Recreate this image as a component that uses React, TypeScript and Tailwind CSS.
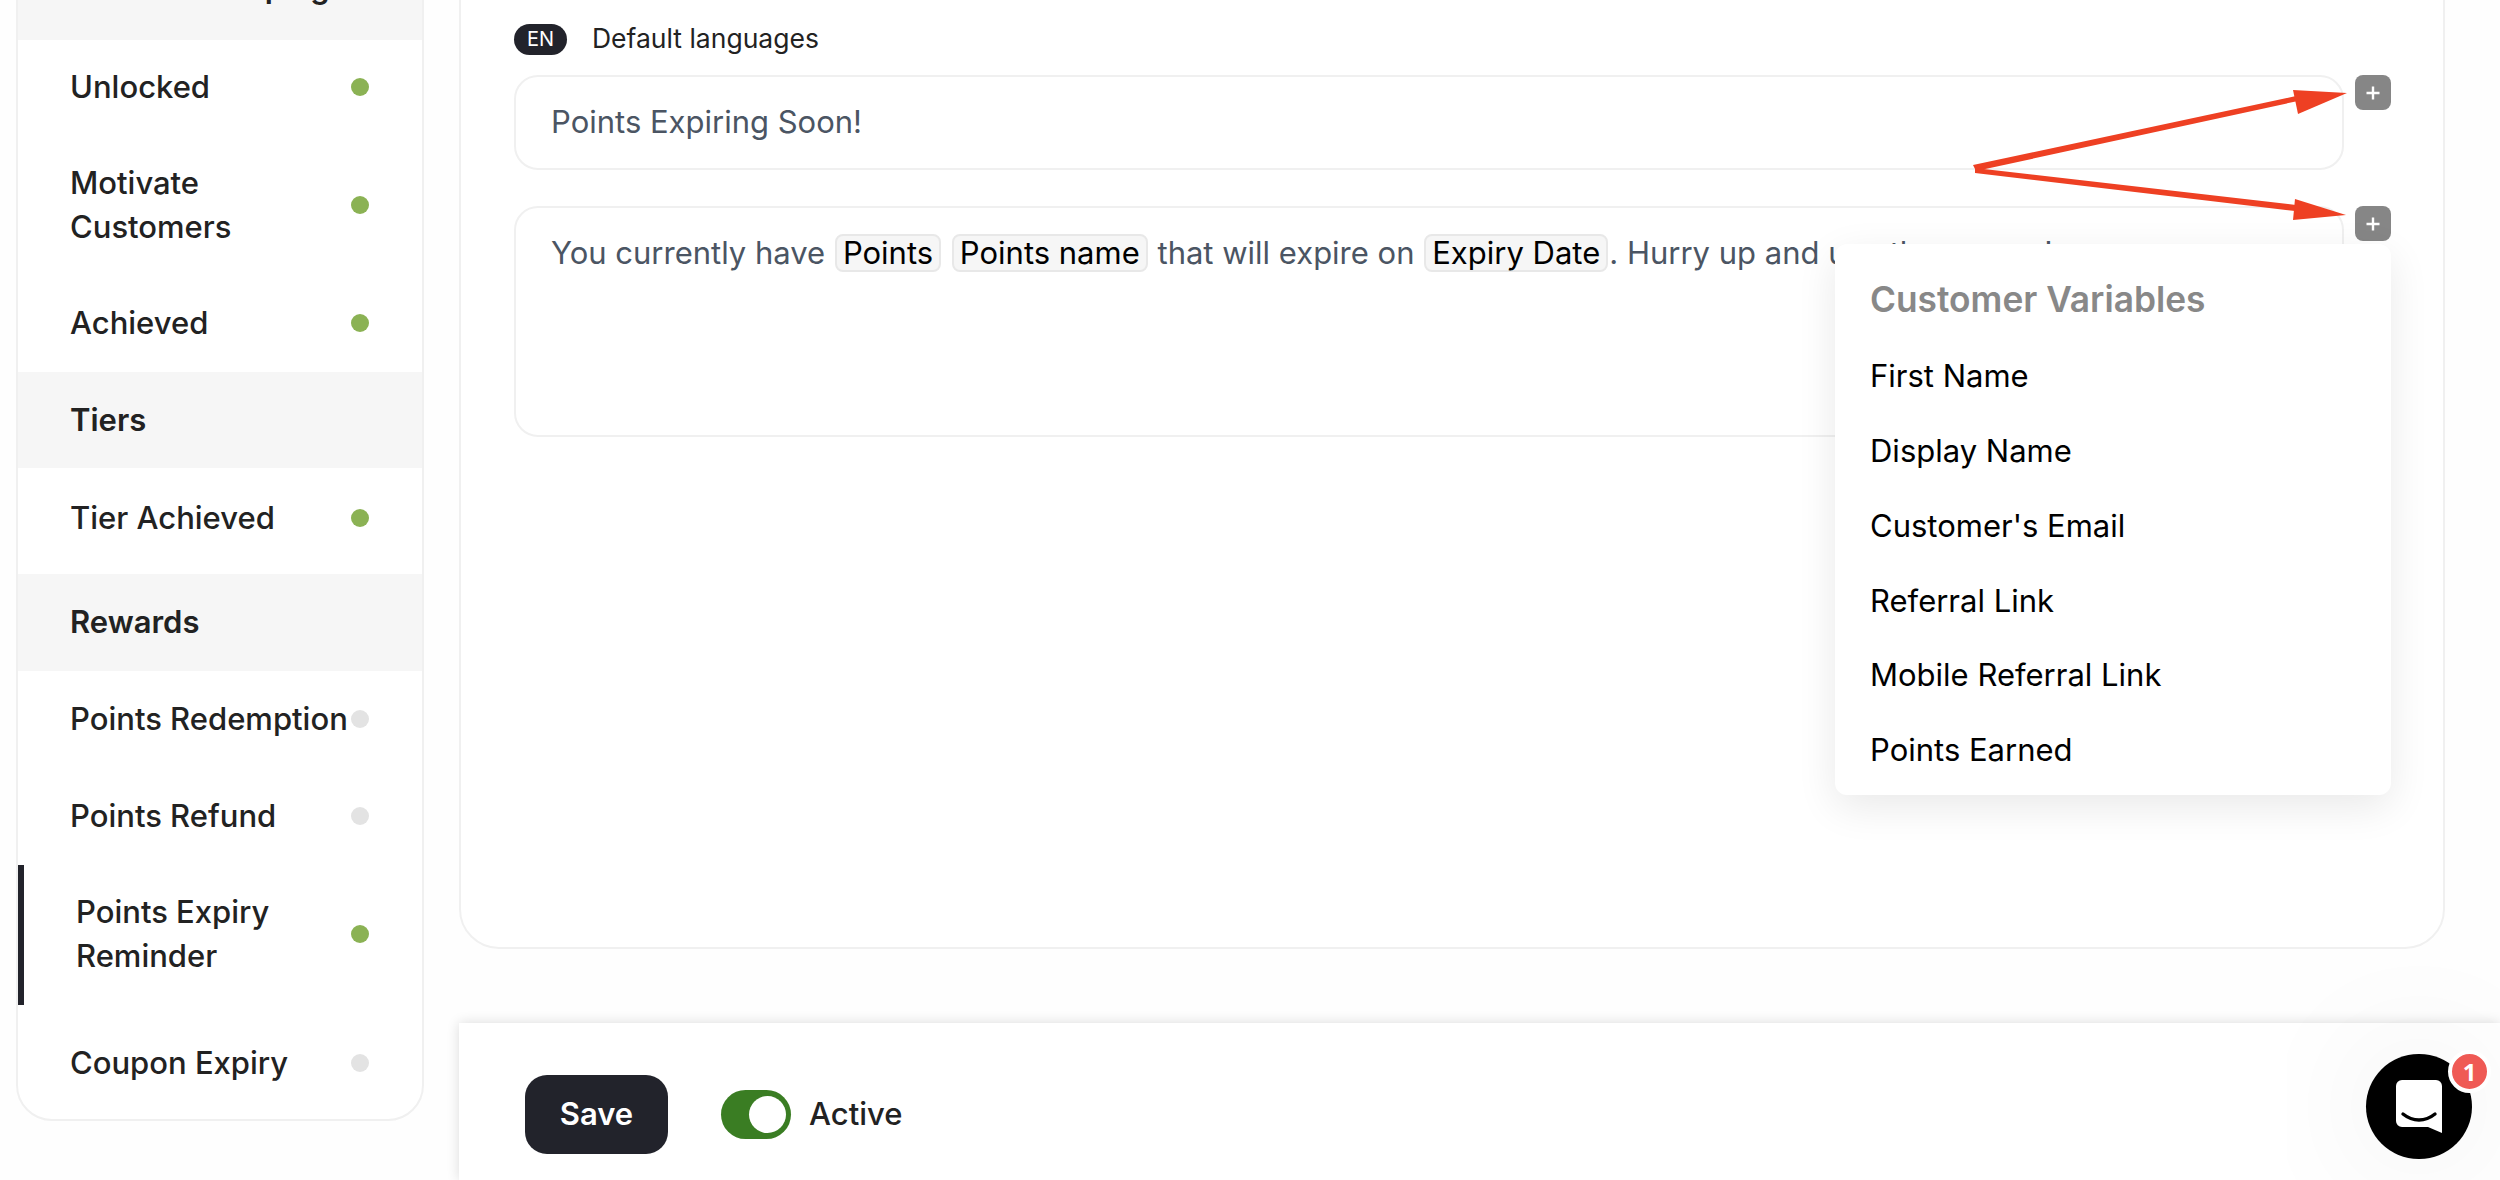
const sidebarItems = [
  { type: 'head', label: 'Referral Campaigns', extra: 'h-[96px] pb-[10px]' },
  { label: 'Unlocked', on: true },
  { label: 'Motivate Customers', on: true },
  { label: 'Achieved', on: true },
  { type: 'head', label: 'Tiers', extra: 'h-[96px]' },
  { label: 'Tier Achieved', on: true, extra: 'pt-[29px] pb-[33px]' },
  { type: 'head', label: 'Rewards', extra: 'h-[97px]' },
  { label: 'Points Redemption', on: false, extra: 'pt-[27px] pb-[27px]' },
  { label: 'Points Refund', on: false },
  { label: 'Points Expiry Reminder', on: true, active: true },
  { label: 'Coupon Expiry', on: false, extra: 'pt-[37px] pb-[34px]' },
];

const customerVariables = [
  'First Name',
  'Display Name',
  "Customer's Email",
  'Referral Link',
  'Mobile Referral Link',
  'Points Earned',
];

const Sidebar = () => (
  <aside className="ml-4 -mt-[58px] h-[1179px] w-[408px] shrink-0 self-start rounded-b-[36px] border-2 border-[#f0f0f0] bg-white">
    {sidebarItems.map((item) =>
      item.type === 'head' ? (
        <div key={item.label} className={`flex items-center bg-[#f6f6f6] pl-[52px] text-[31px] font-semibold text-[#222] ${item.extra}`}>
          {item.label}
        </div>
      ) : (
        <div
          key={item.label}
          className={`relative flex items-center justify-between pr-[53px] text-[31px] leading-[44px] font-medium text-[#222] ${
            item.active ? 'pl-[58px]' : 'pl-[52px]'
          } ${item.extra ?? 'py-[26px]'}`}
        >
          {item.active && <span className="absolute top-0 bottom-0 left-0 w-[6px] bg-[#22232b]" />}
          <span className="max-w-[280px] -translate-y-[1px]">{item.label}</span>
          <span className={`h-[18px] w-[18px] shrink-0 -translate-y-[1px] rounded-full ${item.on ? 'bg-[#8bb254]' : 'bg-[#e3e3e3]'}`} />
        </div>
      ),
    )}
  </aside>
);

const PlusButton = () => (
  <button className="flex h-[35px] w-[36px] shrink-0 items-center justify-center rounded-[8px] bg-[#868686]">
    <svg width="16" height="16" viewBox="0 0 16 16" fill="none" stroke="white" strokeWidth="2.4">
      <path d="M8 1.5v13M1.5 8h13" />
    </svg>
  </button>
);

const Chip = ({ children }: { children: string }) => (
  <span className="mx-[1px] inline-block rounded-[8px] border-2 border-[#e8e8e8] bg-[#f6f6f6] px-[6px] leading-[34px] text-black">
    {children}
  </span>
);

const Arrows = () => (
  <svg className="pointer-events-none absolute top-0 left-0" width="2500" height="400" fill="#ee4023">
    <path d="M1973 165L2296 96L2298 101L1976 171Z" />
    <path d="M2347 93L2293 90L2298 114Z" />
    <path d="M1975 168L2296 205L2295 211L1975 173Z" />
    <path d="M2346 215L2295 199L2293 220Z" />
  </svg>
);

const ChatWidget = () => (
  <div className="absolute top-[1054px] left-[2366px] flex h-[105px] w-[106px] items-center justify-center rounded-full bg-black shadow-[0_0_140px_rgba(0,0,0,0.09)]">
    <svg width="46" height="54" viewBox="0 0 46 54" className="mt-[1px]">
      <path d="M6 0H40a6 6 0 0 1 6 6V53L32 47H6a6 6 0 0 1-6-6V6a6 6 0 0 1 6-6Z" fill="white" />
      <path d="M7 34C17 42 29 42 39 34" fill="none" stroke="black" strokeWidth="3.4" strokeLinecap="round" />
    </svg>
    <span className="absolute -top-[4px] -right-[19px] flex h-[43px] w-[43px] items-center justify-center rounded-full border-4 border-white bg-[#ef5a55] font-['Open_Sans',sans-serif] text-[24px] font-bold text-white">
      1
    </span>
  </div>
);

export default function App() {
  return (
    <div className="relative flex h-[1180px] w-[2500px] overflow-hidden bg-[#fefefe] font-['Inter',sans-serif]">
      <Sidebar />

      <main className="ml-[35px] flex min-w-0 flex-1 flex-col">
        <div className="mr-[55px] -mt-[40px] h-[989px] rounded-[40px] border-2 border-[#f0f0f0] bg-white pr-[52px] pl-[53px] pt-[61px]">
          <div className="flex h-[32px] items-center gap-[25px]">
            <span className="flex h-[31px] w-[53px] items-center justify-center rounded-full bg-[#22232b] text-[20px] text-white">
              EN
            </span>
            <span className="text-[26.5px] text-[#222]">Default languages</span>
          </div>

          <div className="mt-[20px] flex items-start gap-[11px]">
            <div className="flex h-[95px] flex-1 items-center rounded-[24px] border-2 border-[#f0f0f0] pl-[35px] text-[31px] text-[#4b5563]">
              Points Expiring Soon!
            </div>
            <PlusButton />
          </div>

          <div className="relative mt-[36px] flex items-start gap-[11px]">
            <div className="h-[231px] flex-1 rounded-[24px] border-2 border-[#f0f0f0] px-[35px] pt-[23px] text-[31px] leading-[44px] text-[#4b5563]">
              You currently have <Chip>Points</Chip> <Chip>Points name</Chip> that will expire on <Chip>Expiry Date</Chip>. Hurry up and use them soon!
            </div>
            <PlusButton />

            <div className="absolute top-[38px] right-0 w-[556px] rounded-[12px] bg-white px-[35px] pt-[34px] pb-[7px] shadow-[0_12px_40px_rgba(0,0,0,0.09)]">
              <p className="text-[35.3px] leading-[44px] font-semibold text-[#888]">Customer Variables</p>
              <ul className="mt-[17px]">
                {customerVariables.map((name) => (
                  <li key={name} className="flex h-[74.8px] items-center text-[31px] text-black">
                    {name}
                  </li>
                ))}
              </ul>
            </div>
          </div>
        </div>

        <div className="mt-[74px] flex flex-1 items-center bg-white pt-[25px] pl-[66px] shadow-[0_0_12px_rgba(0,0,0,0.14)]">
          <button className="h-[79px] w-[143px] rounded-[22px] bg-[#22232b] text-[31px] font-semibold text-white">Save</button>
          <div className="ml-[53px] flex h-[49px] w-[70px] items-center justify-end rounded-full bg-[#3a7d23] pr-[5px]">
            <span className="h-[37px] w-[37px] rounded-full bg-white" />
          </div>
          <span className="ml-[18px] text-[31px] font-medium text-[#222]">Active</span>
        </div>
      </main>

      <Arrows />
      <ChatWidget />
    </div>
  );
}
